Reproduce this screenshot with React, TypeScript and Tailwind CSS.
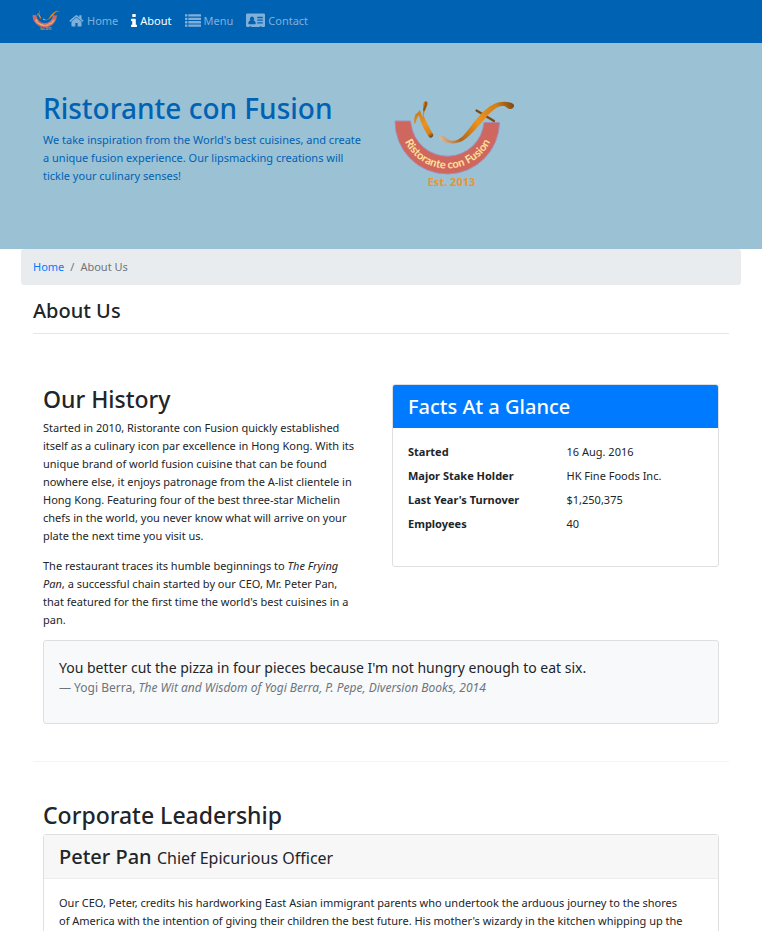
import React from "react";

const LIST_ROWS = [0, 1, 2, 3];

function HomeIcon() {
  return (
    <svg viewBox="40 128 1712 1472" className="h-[13px] w-[15px]" fill="currentColor" aria-hidden="true">
      <path d="M1472 992v480q0 26-19 45t-45 19h-384v-384h-256v384h-384q-26 0-45-19t-19-45v-480q0-1 .5-3t.5-3l575-474 575 474q1 2 1 6zm223-69l-62 74q-8 9-21 11h-3q-13 0-21-7l-692-577-692 577q-12 8-24 7-13-2-21-11l-62-74q-8-10-7-23.5t11-21.5l719-599q32-26 76-26t76 26l244 204v-195q0-14 9-23t23-9h192q14 0 23 9t9 23v408l219 182q10 8 11 21.5t-7 23.5z" />
    </svg>
  );
}

function InfoIcon() {
  return (
    <svg viewBox="576 128 640 1408" className="h-[13px] w-[6px]" fill="currentColor" aria-hidden="true">
      <path d="M1216 1344v128q0 26-19 45t-45 19h-512q-26 0-45-19t-19-45v-128q0-26 19-45t45-19h64v-384h-64q-26 0-45-19t-19-45v-128q0-26 19-45t45-19h384q26 0 45 19t19 45v576h64q26 0 45 19t19 45zm-128-1152v192q0 26-19 45t-45 19h-256q-26 0-45-19t-19-45v-192q0-26 19-45t45-19h256q26 0 45 19t19 45z" />
    </svg>
  );
}

function ListIcon() {
  return (
    <svg viewBox="0 0 16 13" className="h-[13px] w-4" fill="currentColor" aria-hidden="true">
      {LIST_ROWS.map((i) => (
        <g key={i}>
          <rect x="0" y={0.3 + i * 3.4} width="2.4" height="2.3" rx="0.3" />
          <rect x="3.3" y={0.3 + i * 3.4} width="12.7" height="2.3" rx="0.3" />
        </g>
      ))}
    </svg>
  );
}

function CardIcon() {
  return (
    <svg viewBox="0 0 19 15" className="h-[15px] w-[19px]" aria-hidden="true">
      <path
        fill="currentColor"
        fillRule="evenodd"
        d="M1.3 0.5h16.4A1.3 1.3 0 0 1 19 1.8v11a1.3 1.3 0 0 1-1.3 1.3H15.5v-.9h-1.8v.9H5.3v-.9H3.5v.9H1.3A1.3 1.3 0 0 1 0 12.800V1.800A1.3 1.3 0 0 1 1.3.5zM6 3.500a2.200 2.400 0 0 0-1.500 4.100C3.200 7.800 2.300 8.700 2.300 10.400q0 .8.8.8h5.800q.8 0 .8-.8c0-1.700-.9-2.600-2.200-2.800A2.200 2.400 0 0 0 6 3.500zM11.300 3.800v1.400h5.500V3.800zM11.300 6.600v1.200h5.500V6.600zM11.300 9.200v1.200h5.500V9.200z"
      />
    </svg>
  );
}

function Logo({ className, id }: { className: string; id: string }) {
  return (
    <svg viewBox="12 8 126 92" className={className} role="img" aria-label="Ristorante con Fusion, Est. 2013">
      <defs>
        <path id={id + "-arc"} d="M20 31a47.500 47.500 0 0 0 95 0" />
        <linearGradient id={id + "-r"} gradientUnits="userSpaceOnUse" x1="38" y1="20" x2="52" y2="47">
          <stop offset="0" stopColor="#c47a22" />
          <stop offset="0.5" stopColor="#ec9320" />
          <stop offset="0.85" stopColor="#d9851c" />
          <stop offset="1" stopColor="#6e3d10" />
        </linearGradient>
        <linearGradient id={id + "-f"} gradientUnits="userSpaceOnUse" x1="60" y1="48" x2="134" y2="14">
          <stop offset="0" stopColor="#d8b79a" />
          <stop offset="0.22" stopColor="#b0651a" />
          <stop offset="0.5" stopColor="#ee921b" />
          <stop offset="0.8" stopColor="#d07f1c" />
          <stop offset="1" stopColor="#7a4513" />
        </linearGradient>
      </defs>
      <path
        d="M15 31H30.500L31 34A36.700 36.700 0 0 0 104 32.500H119.500A52.500 52.500 0 0 1 67.500 84A52.500 52.500 0 0 1 15 31Z"
        fill="#d0675f"
        stroke="#a58db5"
        strokeWidth="1"
      />
      <path
        d="M34.300 33.500C34 29 34.500 25 36.500 23.500C38 22.500 39 21.500 39.800 20C41 22 41.500 25 42.500 27C43.500 23 42.500 15 44 12C45.500 10.500 48 11 47.800 13.500C47.500 17 43.500 22 43.800 26C46 32 49.500 38 53.300 44.500C53.500 47.500 50.500 48.500 49 47C44.500 40.500 40.500 33 39 25.500C36.500 27.500 36.500 31 35.200 33.800Z"
        fill={`url(#${id}-r)`}
      />
      <path d="M45.800 12.500C46.500 15 44.800 17.500 44 20" stroke="#8d5417" strokeWidth="1.800" strokeLinecap="round" fill="none" />
      <path d="M96.500 20.500L114 31" stroke="#7c4a17" strokeWidth="2.200" strokeLinecap="round" />
      <path
        d="M59 48.500C59 45 63 45 66 48C72 52.500 77 51.500 83 46C93 35 101 20 114 14C121 10.500 132 11.500 134 15C134.500 19.500 129 20.500 125.500 16.500C119 14.500 114.500 19 108.500 24.500C100 34 92 44.500 84 50C76 55.500 64 54 59 48.500Z"
        fill={`url(#${id}-f)`}
      />
      <text fill="#ffe39a" fontSize="11" fontWeight="700" fontFamily='Lato, "Open Sans", sans-serif'>
        <textPath href={`#${id}-arc`} startOffset="50%" textAnchor="middle">
          Ristorante con Fusion
        </textPath>
      </text>
      <text
        x="71.500"
        y="95.500"
        textAnchor="middle"
        fill="#e8952f"
        fontSize="11"
        fontWeight="700"
        fontFamily='"Noto Sans", sans-serif'
      >
        Est. 2013
      </text>
    </svg>
  );
}

const NAV = [
  { label: "Home", icon: <HomeIcon />, active: false },
  { label: "About", icon: <InfoIcon />, active: true },
  { label: "Menu", icon: <ListIcon />, active: false },
  { label: "Contact", icon: <CardIcon />, active: false },
];

const FACTS = [
  ["Started", "16 Aug. 2016"],
  ["Major Stake Holder", "HK Fine Foods Inc."],
  ["Last Year's Turnover", "$1,250,375"],
  ["Employees", "40"],
];

export default function App() {
  return (
    <div className="min-h-screen bg-white font-['Noto_Sans','Open_Sans',sans-serif] text-[11px] leading-[18px] text-[#212529]">
      <nav className="bg-[#0062b3]">
        <div className="mx-auto flex h-[43px] max-w-[720px] items-center px-[11px] pb-[2px]">
          <a href="#home" className="mr-2">
            <Logo id="brand" className="h-[23px] w-[29px]" />
          </a>
          <ul className="flex items-center gap-[13px]">
            {NAV.map((item) => (
              <li key={item.label}>
                <a
                  href={"#" + item.label.toLowerCase()}
                  className={
                    item.active ? "flex items-center gap-[3px] text-white" : "flex items-center gap-[3px] text-[#80b0d9]"
                  }
                >
                  {item.icon}
                  <span>{item.label}</span>
                </a>
              </li>
            ))}
          </ul>
        </div>
      </nav>

      <header className="bg-[#9bc1d5] text-[#0062b3]">
        <div className="mx-auto grid max-w-[720px] grid-cols-2 gap-x-[22px] px-[22px] pt-[47px] pb-[52px]">
          <div className="pb-3">
            <h1 className="mb-[5px] text-[28px] leading-9 font-medium whitespace-nowrap">Ristorante con Fusion</h1>
            <p>
              We take inspiration from the World's best cuisines, and create
              <br />
              a unique fusion experience. Our lipsmacking creations will
              <br />
              tickle your culinary senses!
            </p>
          </div>
          <div className="pt-2">
            <Logo id="hero" className="h-[92px] w-[126px]" />
          </div>
        </div>
      </header>

      <main className="mx-auto max-w-[720px]">
        <nav aria-label="Breadcrumb" className="rounded-[3px] bg-[#e9ecef] px-3 py-[9px]">
          <ol className="flex gap-[6px] text-[#6c757d]">
            <li>
              <a href="#home" className="text-[#007bff]">
                Home
              </a>
            </li>
            <li aria-hidden="true">/</li>
            <li>About Us</li>
          </ol>
        </nav>

        <div className="px-3">
          <h3 className="mt-[13px] text-[20px] leading-[25px] font-medium">About Us</h3>
          <hr className="mt-[10px] border-[#e6e6e6]" />

          <section className="mt-[50px] grid grid-cols-2 gap-x-[22px] px-[10px]">
            <div>
              <h2 className="mt-[1px] mb-[5px] text-[23px] leading-[29px] font-medium">Our History</h2>
              <p className="mb-3">
                Started in 2010, Ristorante con Fusion quickly established
                <br />
                itself as a culinary icon par excellence in Hong Kong. With its
                <br />
                unique brand of world fusion cuisine that can be found
                <br />
                nowhere else, it enjoys patronage from the A-list clientele in
                <br />
                Hong Kong. Featuring four of the best three-star Michelin
                <br />
                chefs in the world, you never know what will arrive on your
                <br />
                plate the next time you visit us.
              </p>
              <p>
                The restaurant traces its humble beginnings to <em>The Frying</em>
                <br />
                <em>Pan</em>, a successful chain started by our CEO, Mr. Peter Pan,
                <br />
                that featured for the first time the world's best cuisines in a
                <br />
                pan.
              </p>
            </div>
            <div>
              <div className="overflow-hidden rounded-[3px] border border-[#dfdfdf]">
                <h3 className="bg-[#007bff] px-[15px] py-[9px] text-[20px] leading-[25px] font-medium text-white">
                  Facts At a Glance
                </h3>
                <dl className="grid grid-cols-2 gap-x-[22px] gap-y-[6px] px-[15px] pt-[15px] pb-[33px]">
                  {FACTS.map(([term, value]) => (
                    <React.Fragment key={term}>
                      <dt className="font-bold whitespace-nowrap">{term}</dt>
                      <dd>{value}</dd>
                    </React.Fragment>
                  ))}
                </dl>
              </div>
            </div>
          </section>

          <section className="mt-[11px] px-[10px]">
            <blockquote className="rounded-[3px] border border-[#dfdfdf] bg-[#f8f9fa] px-[15px] pt-4 pb-[26px]">
              <p className="text-[14px] leading-[22px]">
                You better cut the pizza in four pieces because I'm not hungry enough to eat six.
              </p>
              <footer className="text-[12px] text-[#6c757d]">
                — Yogi Berra, <cite>The Wit and Wisdom of Yogi Berra, P. Pepe, Diversion Books, 2014</cite>
              </footer>
            </blockquote>
          </section>

          <hr className="mt-[37px] border-[#f5f5f5]" />

          <section className="mt-[39px] px-[10px]">
            <h2 className="mb-1 text-[23px] leading-[29px] font-medium">Corporate Leadership</h2>
            <article className="rounded-[3px] border border-[#dfdfdf]">
              <h3 className="border-b border-[#ececec] bg-[#f7f7f7] px-[15px] py-[9px] text-[20px] leading-[25px] font-medium">
                Peter Pan <small className="text-[16px] leading-none font-normal">Chief Epicurious Officer</small>
              </h3>
              <p className="px-[15px] py-[15px]">
                Our CEO, Peter, credits his hardworking East Asian immigrant parents who undertook the arduous journey to
                the shores
                <br />
                of America with the intention of giving their children the best future. His mother's wizardy in the
                kitchen whipping up the
              </p>
            </article>
          </section>
        </div>
      </main>
    </div>
  );
}
